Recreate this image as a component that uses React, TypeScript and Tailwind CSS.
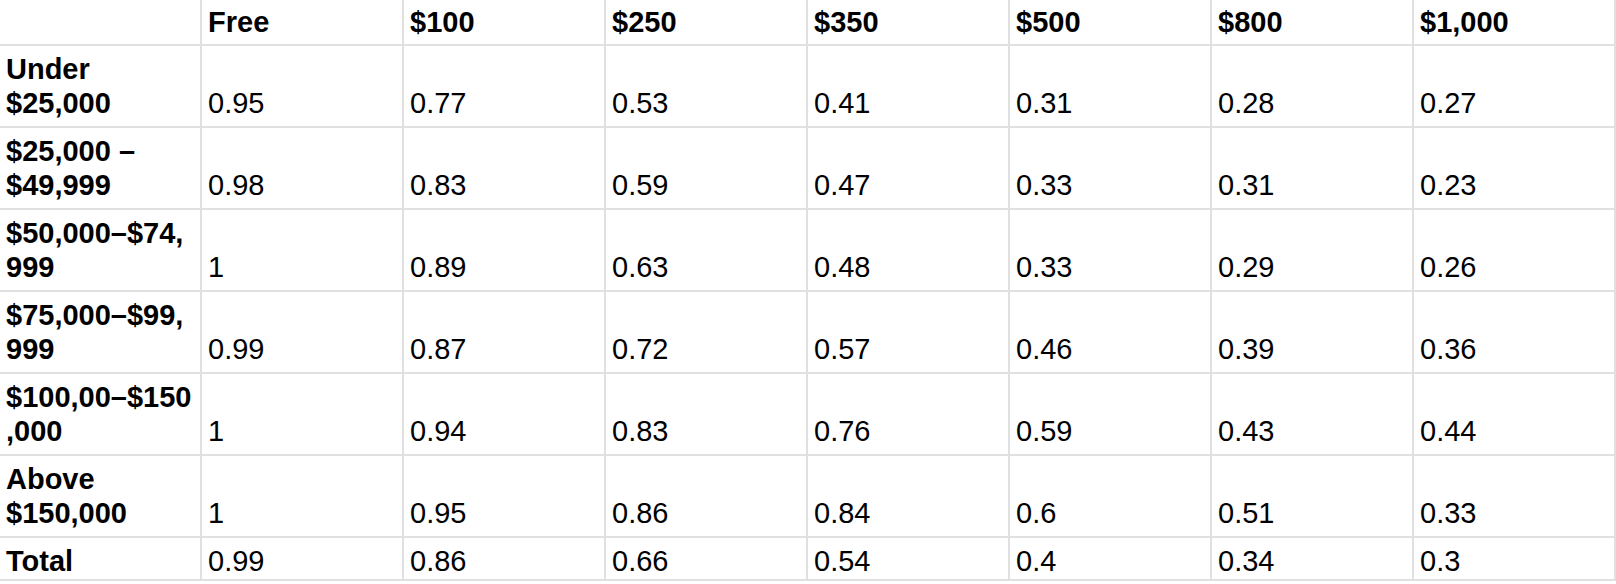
import React from "react";

const headers = ["", "Free", "$100", "$250", "$350", "$500", "$800", "$1,000"];

const rows: { label: string[]; values: string[] }[] = [
  { label: ["Under", "$25,000"], values: ["0.95", "0.77", "0.53", "0.41", "0.31", "0.28", "0.27"] },
  { label: ["$25,000 –", "$49,999"], values: ["0.98", "0.83", "0.59", "0.47", "0.33", "0.31", "0.23"] },
  { label: ["$50,000–$74,", "999"], values: ["1", "0.89", "0.63", "0.48", "0.33", "0.29", "0.26"] },
  { label: ["$75,000–$99,", "999"], values: ["0.99", "0.87", "0.72", "0.57", "0.46", "0.39", "0.36"] },
  { label: ["$100,00–$150", ",000"], values: ["1", "0.94", "0.83", "0.76", "0.59", "0.43", "0.44"] },
  { label: ["Above", "$150,000"], values: ["1", "0.95", "0.86", "0.84", "0.6", "0.51", "0.33"] },
];

const total = ["0.99", "0.86", "0.66", "0.54", "0.4", "0.34", "0.3"];

export default function App() {
  return (
    <div
      className="w-[1616px] h-[584px] bg-white text-black overflow-hidden"
      style={{ fontFamily: '"Liberation Sans", Arial, sans-serif' }}
    >
      <div className="grid grid-cols-[repeat(8,202px)] text-[29px] leading-[34px]">
        {headers.map((h, i) => (
          <div
            key={`h${i}`}
            className="h-[46px] border-r-2 border-b-2 border-[#e0e0e0] flex items-end pl-[6px] pb-[5px] font-bold whitespace-nowrap"
          >
            {h}
          </div>
        ))}
        {rows.map((r, ri) => (
          <React.Fragment key={`r${ri}`}>
            <div className="h-[82px] border-r-2 border-b-2 border-[#e0e0e0] flex flex-col justify-end pl-[6px] pb-[6px] font-bold whitespace-nowrap">
              <span>{r.label[0]}</span>
              <span>{r.label[1]}</span>
            </div>
            {r.values.map((v, vi) => (
              <div
                key={`v${ri}-${vi}`}
                className="h-[82px] border-r-2 border-b-2 border-[#e0e0e0] flex items-end pl-[6px] pb-[6px] whitespace-nowrap"
              >
                {v}
              </div>
            ))}
          </React.Fragment>
        ))}
        <div className="h-[43px] border-r-2 border-b-2 border-[#e0e0e0] flex items-end pl-[6px] pb-[1px] font-bold whitespace-nowrap">
          Total
        </div>
        {total.map((v, i) => (
          <div
            key={`t${i}`}
            className="h-[43px] border-r-2 border-b-2 border-[#e0e0e0] flex items-end pl-[6px] pb-[1px] whitespace-nowrap"
          >
            {v}
          </div>
        ))}
      </div>
    </div>
  );
}
